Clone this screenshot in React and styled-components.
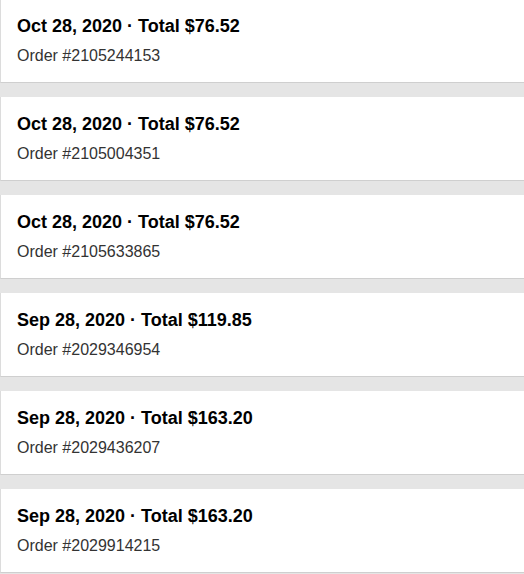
import styled, { createGlobalStyle } from "styled-components"

const orders = [
    { date: "Oct 28, 2020", total: "76.52", number: "2105244153" },
    { date: "Oct 28, 2020", total: "76.52", number: "2105004351" },
    { date: "Oct 28, 2020", total: "76.52", number: "2105633865" },
    { date: "Sep 28, 2020", total: "119.85", number: "2029346954" },
    { date: "Sep 28, 2020", total: "163.20", number: "2029436207" },
    { date: "Sep 28, 2020", total: "163.20", number: "2029914215" },
]

const GlobalStyle = createGlobalStyle`
    body {
        margin: 0;
        background: #e5e5e5;
        font-family: "Liberation Sans", Arial, sans-serif;
    }
`

const OrderHistory = () => {
    return (
        <List>
            {orders.map(o => (
                <Card key={o.number}>
                    <Title>{o.date} · Total ${o.total}</Title>
                    <Number>Order #{o.number}</Number>
                </Card>
            ))}
        </List>
    )
}

const App = () => (
    <>
        <GlobalStyle />
        <OrderHistory />
    </>
)

const List = styled.div`
    display: flex;
    flex-direction: column;
    gap: 14px;
    width: 524px;
    margin-top: -1px;
`

const Card = styled.div`
    box-sizing: border-box;
    height: 84px;
    padding: 16px 16px 0;
    background: #fff;
    border-left: 1px solid #dcdcdc;
    border-bottom: 1px solid #cfcfcf;
`

const Title = styled.div`
    font-size: 18px;
    font-weight: 700;
    line-height: 22px;
    color: #000;
`

const Number = styled.div`
    margin-top: 9px;
    font-size: 16px;
    line-height: 20px;
    color: #333;
`

export default App
